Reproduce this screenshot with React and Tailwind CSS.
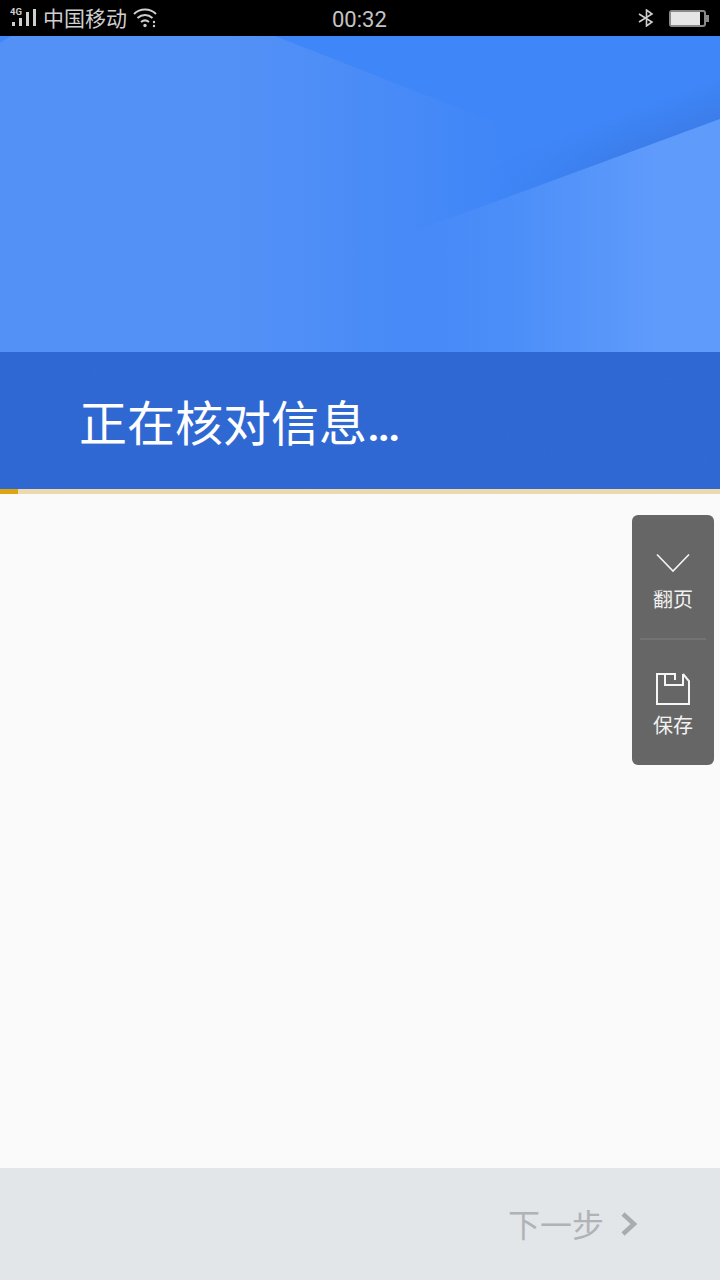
const cjk = "font-['Roboto','Noto_Sans_CJK_SC',sans-serif]";

const StatusBar = () => (
  <div className={`h-[36px] shrink-0 bg-black flex items-center justify-between text-[#cfcfcf] ${cjk}`}>
    <div className="flex items-center">
      <svg className="ml-[10px]" width="28" height="24" viewBox="0 0 28 24" fill="#cfcfcf">
        <text x="0" y="9" fontSize="9.5" fontWeight="700" fontFamily="Roboto, sans-serif">4G</text>
        <rect x="2" y="16" width="3" height="4" />
        <rect x="9" y="12" width="3" height="8" />
        <rect x="16" y="6" width="3" height="14" />
        <rect x="23" y="3" width="3" height="17" />
      </svg>
      <span className="ml-[5px] pt-[2px] text-[21px] leading-none">中国移动</span>
      <svg className="ml-[6px]" width="24" height="22" viewBox="0 0 24 22" fill="none" stroke="#cfcfcf" strokeWidth="2">
        <path d="M1 7C7 1 17 1 23 7" />
        <path d="M4.5 11C9 7 15 7 19.5 11" />
        <path d="M8 15C10.5 13 13.5 13 16 15" />
        <circle cx="12" cy="18.5" r="1.7" fill="#cfcfcf" stroke="none" />
        <circle cx="21" cy="15" r="1.2" fill="#cfcfcf" stroke="none" />
        <circle cx="21" cy="19" r="1.2" fill="#cfcfcf" stroke="none" />
      </svg>
    </div>
    <span className="absolute left-[332px] pt-[3px] text-[22px] leading-none text-[#c4c4c4]">00:32</span>
    <div className="flex items-center">
      <svg width="16" height="18" viewBox="0 0 16 18" fill="none" stroke="#cfcfcf" strokeWidth="1.6">
        <path d="M1 5L14 13L8.5 17V1L14 5L1 13" />
      </svg>
      <div className="ml-[15px] mr-[11px] flex items-center">
        <div className="w-[37px] h-[17px] rounded-[3px] border-2 border-[#8a8a8a] pr-[4px]">
          <div className="h-full bg-[#e6e6e6]" />
        </div>
        <div className="w-[3px] h-[7px] bg-[#8a8a8a]" />
      </div>
    </div>
  </div>
);

const Hero = () => (
  <div className="h-[316px] shrink-0">
    <svg className="block w-full h-full" viewBox="0 0 720 316" preserveAspectRatio="none">
      <defs>
        <linearGradient id="left" gradientUnits="userSpaceOnUse" x1="230" y1="0" x2="510" y2="0">
          <stop offset="0" stopColor="#5491f6" />
          <stop offset="1" stopColor="#5491f6" stopOpacity="0" />
        </linearGradient>
        <linearGradient id="right" gradientUnits="userSpaceOnUse" x1="410" y1="0" x2="660" y2="0">
          <stop offset="0" stopColor="#5f9bfb" stopOpacity="0" />
          <stop offset="1" stopColor="#5f9bfb" />
        </linearGradient>
        <linearGradient id="shade" gradientUnits="userSpaceOnUse" x1="606" y1="85" x2="620" y2="122">
          <stop offset="0" stopColor="#3872d8" stopOpacity="0" />
          <stop offset="1" stopColor="#3872d8" stopOpacity="0.45" />
        </linearGradient>
        <linearGradient id="shadeFade" gradientUnits="userSpaceOnUse" x1="490" y1="0" x2="620" y2="0">
          <stop offset="0" stopColor="#000000" />
          <stop offset="1" stopColor="#ffffff" />
        </linearGradient>
        <mask id="shadeMask">
          <rect width="720" height="316" fill="url(#shadeFade)" />
        </mask>
      </defs>
      <rect width="720" height="316" fill="#3f86f8" />
      <path d="M480 0H720V83L480 172Z" fill="url(#shade)" mask="url(#shadeMask)" />
      <path d="M0 0H275L530 100L530 316H0Z" fill="url(#left)" />
      <path d="M380 208L720 83V316H380Z" fill="url(#right)" />
      <path d="M0 0H11L0 7Z" fill="#3f86f8" />
    </svg>
  </div>
);

const SidePanel = () => (
  <div className={`absolute right-[6px] top-[21px] w-[82px] h-[250px] rounded-[6px] bg-[#666666] flex flex-col items-center text-[#f2f2f2] ${cjk}`}>
    <div className="h-[123px] w-full flex flex-col items-center pt-[38px]">
      <svg width="34" height="20" viewBox="0 0 34 20" fill="none" stroke="#f5f5f5" strokeWidth="1.6">
        <path d="M1 1.5L17 18L33 1.5" />
      </svg>
      <span className="mt-[13px] text-[20px] leading-[28px]">翻页</span>
    </div>
    <div className="w-[66px] h-[2px] bg-[#737373]" />
    <div className="w-full flex flex-col items-center pt-[33px]">
      <svg width="34" height="32" viewBox="0 0 34 32" fill="none" stroke="#f5f5f5" strokeWidth="2">
        <path d="M19 7V1H1V31H33V8L27 1" />
        <path d="M9 1V12H27V1" />
      </svg>
      <span className="mt-[7px] text-[20px] leading-[28px]">保存</span>
    </div>
  </div>
);

export default function App() {
  return (
    <div className="relative w-[720px] h-[1280px] flex flex-col overflow-hidden bg-[#fafafa]">
      <StatusBar />
      <Hero />
      <div className={`relative h-[137px] shrink-0 bg-[#2e67d3] flex items-center pl-[79px] pt-[8px] text-white text-[48px] ${cjk}`}>
        <svg className="absolute inset-0 w-full h-full opacity-[0.03]">
          <filter id="grain">
            <feTurbulence type="fractalNoise" baseFrequency="0.9" numOctaves="2" />
            <feColorMatrix type="saturate" values="0" />
          </filter>
          <rect width="100%" height="100%" filter="url(#grain)" />
        </svg>
        <span className="relative">正在核对信息<span className="font-medium tracking-[-3px]">...</span></span>
      </div>
      <div className="h-[5px] shrink-0 bg-[#ecd9ae]">
        <div className="w-[18px] h-full bg-[#dda60f]" />
      </div>
      <div className="relative flex-1">
        <SidePanel />
      </div>
      <div className={`h-[112px] shrink-0 bg-[#e2e6e9] flex items-center justify-end pr-[82px] text-[#b0b3b6] text-[32px] ${cjk}`}>
        <span className="pt-[4px]">下一步</span>
        <svg className="ml-[16px]" width="18" height="24" viewBox="0 0 18 24" fill="none" stroke="#a9acaf" strokeWidth="4.5">
          <path d="M3 2L14 12L3 22" />
        </svg>
      </div>
    </div>
  );
}
